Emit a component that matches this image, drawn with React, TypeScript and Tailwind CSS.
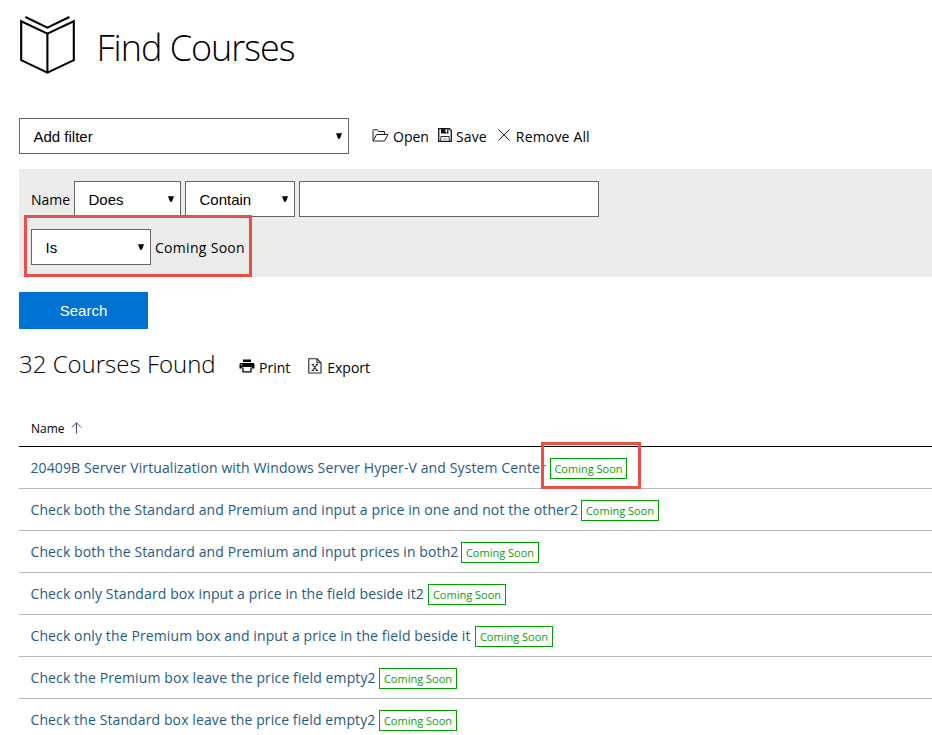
import type { ReactNode } from "react";

type Course = { name: string; width: string };

const courses: Course[] = [
  { name: "20409B Server Virtualization with Windows Server Hyper-V and System Center", width: "w-[519.5px]" },
  { name: "Check both the Standard and Premium and input a price in one and not the other2", width: "w-[550.5px]" },
  { name: "Check both the Standard and Premium and input prices in both2", width: "w-[430.5px]" },
  { name: "Check only Standard box input a price in the field beside it2", width: "w-[397.5px]" },
  { name: "Check only the Premium box and input a price in the field beside it", width: "w-[444.5px]" },
  { name: "Check the Premium box leave the price field empty2", width: "w-[348.5px]" },
  { name: "Check the Standard box leave the price field empty2", width: "w-[348.5px]" },
];

function BookIcon() {
  return (
    <svg width="58" height="60" viewBox="0 0 58 60" fill="none" stroke="#000" strokeWidth="2.1">
      <path d="M2.2 6.2 28.4 18.6 54.8 6.2V45.2L28.4 57.6 2.2 45.2Z" />
      <path d="M28.4 18.6V57.6" />
      <path d="M6.4 2 28.4 12.6 50.4 2" />
    </svg>
  );
}

function FolderIcon() {
  return (
    <svg className="-mt-[3px]" width="17" height="13" viewBox="0 0 17 13" fill="none" stroke="#222" strokeWidth="1">
      <path d="M1 11.5V1.5q0-.8.8-.8H5.200l1.300 1.800H12.500V5" />
      <path d="M1 12 4.600 5.500H16L12.500 12Z" strokeLinejoin="round" />
    </svg>
  );
}

function SaveIcon() {
  return (
    <svg className="-mt-[3px]" width="14" height="14" viewBox="0 0 14 14" fill="none">
      <path d="M.7.7H11.500L13.300 2.500V13.300H.7Z" stroke="#1c1020" strokeWidth="1.3" />
      <path d="M3 0H10.500V5.500H3Z" fill="#1c1020" />
      <path d="M7.500 1.200H9.200V4.300H7.500Z" fill="#fff" />
      <path d="M2.800 13V8.500H11.200V13" stroke="#3a2a30" />
      <path d="M4.500 11H9.500" stroke="#999" />
    </svg>
  );
}

function CloseIcon() {
  return (
    <svg className="-mt-[4px]" width="12" height="12" viewBox="0 0 12 12" stroke="#2b2030" strokeWidth="1">
      <path d="M.5.5 11.500 11.500M11.500.5.5 11.500" />
    </svg>
  );
}

function PrintIcon() {
  return (
    <svg className="-mt-[3px]" width="16" height="14" viewBox="0 0 16 14">
      <path d="M4 .5H12V3H4Z" fill="#000" />
      <path d="M1.500 4H14.500Q15.500 4 15.500 5.500V9.500H13V8H3V9.500H.5V5.500Q.5 4 1.500 4Z" fill="#000" />
      <path d="M1.800 5.400H3.200V6.400H1.800Z" fill="#fff" />
      <path d="M4 8.500V12.800H12V8.500" fill="#fff" stroke="#000" strokeWidth="1.3" />
    </svg>
  );
}

function ExcelIcon() {
  return (
    <svg className="-mt-[3px]" width="14" height="16" viewBox="0 0 14 16" fill="none" stroke="#2a2228" strokeWidth="1.1">
      <path d="M.8.8H9L13 4.800V15H.8Z" />
      <path d="M9 .8V4.800H13" />
      <path d="M4.500 6.500 9 12.500M9 6.500 4.500 12.500M3.500 6.500H5.800M7.800 6.500H10M3.500 12.500H5.800M7.800 12.500H10" />
    </svg>
  );
}

function ArrowUpIcon() {
  return (
    <svg className="-mt-[3px]" width="12" height="12" viewBox="0 0 12 12" fill="none" stroke="#3f4570" strokeWidth="1">
      <path d="M5.500 11.500V.8M.8 5.500 5.500.8 10.200 5.500" />
    </svg>
  );
}

function Select({ label, className }: { label: string; className: string }) {
  return (
    <button
      className={`flex h-9 shrink-0 items-center justify-between border border-[#666] bg-white pt-px pl-[13.5px] pr-[6px] font-['Liberation_Sans',Arial,sans-serif] text-[15px] leading-5 ${className}`}
    >
      <span>{label}</span>
      <svg className="-mt-[2px]" width="6" height="6" viewBox="0 0 6 6">
        <path d="M0 .3H6L3.900 5.700H2.100Z" fill="#000" />
      </svg>
    </button>
  );
}

function Action({ icon, label, className }: { icon: ReactNode; label: string; className: string }) {
  return (
    <button className={`flex items-center whitespace-nowrap ${className}`}>
      {icon}
      <span>{label}</span>
    </button>
  );
}

export default function App() {
  return (
    <main className="h-[735px] w-[932px] overflow-hidden bg-white pl-[19px] font-['Open_Sans','Noto_Sans',sans-serif] text-[14px] leading-5 text-black">
      <header className="flex h-[118px] items-start pt-[15px]">
        <BookIcon />
        <h1 className="ml-[19.5px] pt-[9px] text-[36px] leading-[48px] font-light tracking-[-1.02px] whitespace-nowrap">
          Find Courses
        </h1>
      </header>

      <div className="flex h-9 items-center">
        <Select label="Add filter" className="w-[330px]" />
        <Action icon={<FolderIcon />} label="Open" className="ml-[23px] gap-1 pt-px" />
        <Action icon={<SaveIcon />} label="Save" className="ml-[9px] gap-1 pt-px tracking-[0.15px]" />
        <Action icon={<CloseIcon />} label="Remove All" className="ml-[11px] gap-[6px] pt-px tracking-[0.17px]" />
      </div>

      <section className="mt-[15px] flex h-[108px] flex-col gap-3 bg-[#ececec] pt-3 pl-3">
        <div className="flex h-9 items-center">
          <span className="w-[43px] pt-[2px]">Name</span>
          <Select label="Does" className="w-[107px]" />
          <Select label="Contain" className="ml-1 w-[110px]" />
          <input className="ml-1 h-9 w-[300px] border border-[#666] bg-white px-3" />
        </div>
        <div className="relative flex h-9 items-center">
          <Select label="Is" className="w-[120px]" />
          <span className="ml-1 pt-px tracking-[0.3px]">Coming Soon</span>
          <div className="absolute -top-[14px] -left-[7px] h-[62px] w-[228px] border-[3px] border-[#e94f48]" />
        </div>
      </section>

      <button className="mt-[15px] flex h-[37px] w-[129px] items-center justify-center bg-[#0072d2] font-['Liberation_Sans',Arial,sans-serif] text-[15px] text-white">
        Search
      </button>

      <div className="mt-[17px] flex h-9 items-center">
        <h2 className="w-[220px] text-[24px] leading-9 font-light whitespace-nowrap">32 Courses Found</h2>
        <Action icon={<PrintIcon />} label="Print" className="gap-[4px] pt-[7px]" />
        <Action icon={<ExcelIcon />} label="Export" className="ml-[18px] gap-[5px] pt-[7px]" />
      </div>

      <div className="mt-[28px] flex h-[37px] items-center gap-[6px] border-b border-black pt-[2px] pl-3 text-[12px]">
        <span>Name</span>
        <ArrowUpIcon />
      </div>

      <ul>
        {courses.map((course, i) => (
          <li key={course.name} className="relative flex h-[42px] items-center border-b border-[#b8b8b8] pl-[11.5px]">
            <a className={`shrink-0 tracking-[0.11px] whitespace-nowrap text-[#275a80] ${course.width}`}>{course.name}</a>
            <span
              className={`mt-[2px] flex h-[21px] items-center justify-center border border-[#00a000] text-[11px] leading-none whitespace-nowrap text-[#109a10] ${i === 0 ? "w-[77px]" : "w-[78px]"}`}
            >
              Coming Soon
            </span>
            {i === 0 && (
              <div className="absolute -top-[5px] left-[522px] h-[47px] w-[100px] border-[3px] border-[#e94f48]" />
            )}
          </li>
        ))}
      </ul>
    </main>
  );
}
